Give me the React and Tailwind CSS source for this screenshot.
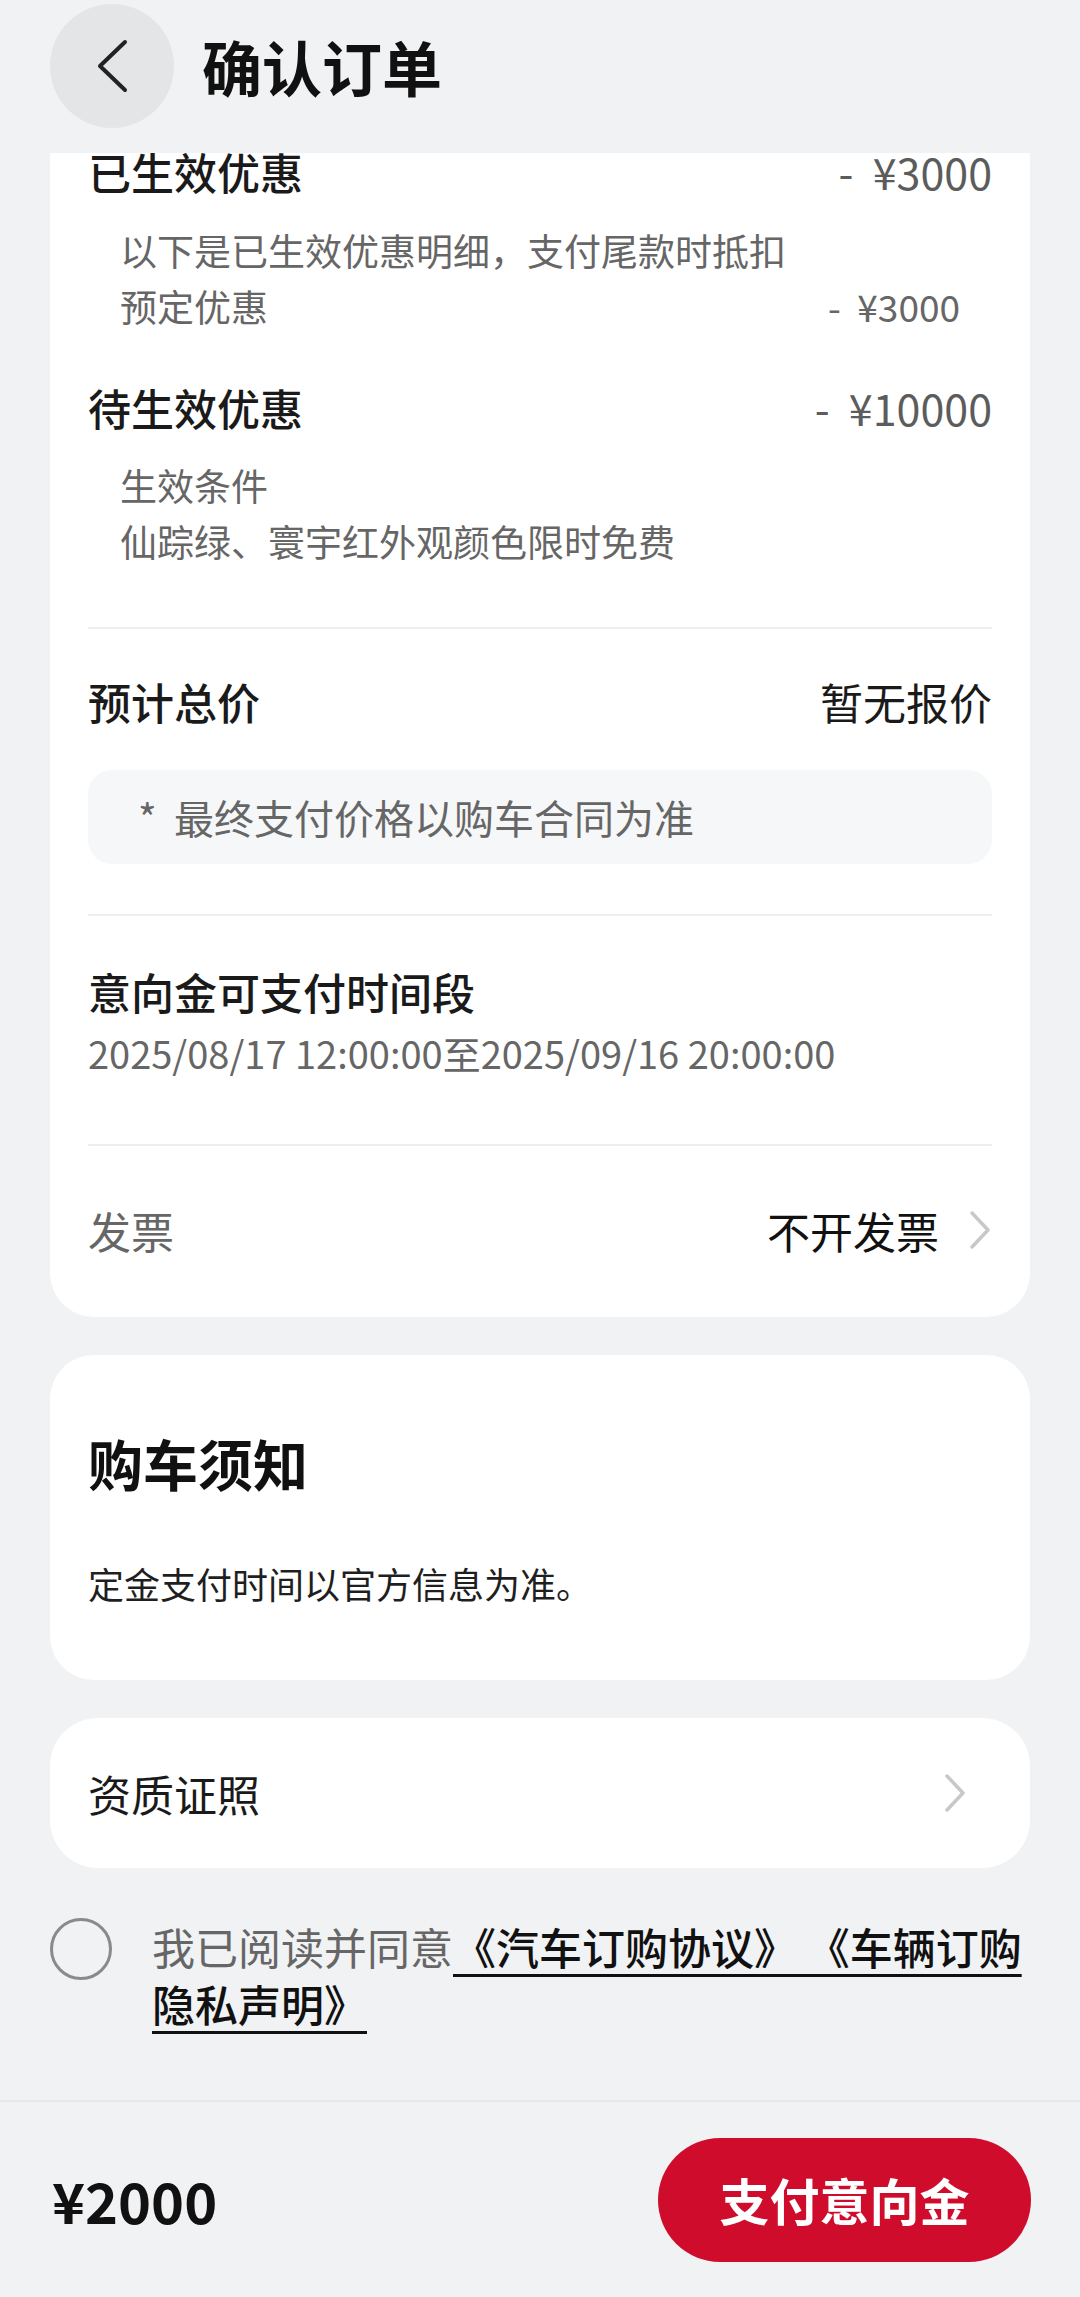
import React from "react";

function Chevron({ className = "" }) {
  return (
    <svg width="24" height="40" viewBox="0 0 24 40" className={className}>
      <polyline
        points="4,3 20,20 4,37"
        fill="none"
        stroke="#c8c8c8"
        strokeWidth="3.5"
        strokeLinecap="round"
        strokeLinejoin="round"
      />
    </svg>
  );
}

function Divider({ className = "" }) {
  return <div className={`h-[2px] bg-[#eeeeee] ${className}`}></div>;
}

export default function App() {
  return (
    <div className="w-[1080px] h-[2297px] flex flex-col bg-[#f1f2f4] overflow-hidden font-['Noto_Sans_CJK_SC',sans-serif]">
      {/* Header */}
      <header className="shrink-0 h-[153px] pt-[3px] pl-[50px]">
        <div className="flex items-center h-[125px]">
          <div className="w-[124px] h-[124px] rounded-full bg-[#e4e5e7] flex items-center justify-center">
            <svg width="34" height="54" viewBox="0 0 34 54">
              <polyline
                points="30,3 5,27 30,51"
                fill="none"
                stroke="#222"
                strokeWidth="4"
                strokeLinecap="round"
                strokeLinejoin="round"
              />
            </svg>
          </div>
          <h1 className="ml-[28px] text-[60px] font-bold leading-none text-[#111]">确认订单</h1>
        </div>
      </header>

      {/* Scroll area */}
      <main className="flex-1 overflow-hidden">
        {/* Order detail card (scrolled under header) */}
        <section className="mx-[50px] -mt-[50px] bg-white rounded-[44px] pt-[40px] pb-[59px] px-[38px]">
          <div className="flex justify-between items-center h-[56px]">
            <span className="text-[43px] font-medium text-[#1a1a1a]">已生效优惠</span>
            <span className="text-[43px] text-[#5c5c5c]">-&nbsp; ¥3000</span>
          </div>
          <div className="mt-[23px] px-[32px] text-[37px] leading-[56px] text-[#666]">
            <div>以下是已生效优惠明细，支付尾款时抵扣</div>
            <div className="flex justify-between">
              <span>预定优惠</span>
              <span>-&nbsp; ¥3000</span>
            </div>
          </div>

          <div className="mt-[45px] flex justify-between items-center h-[56px]">
            <span className="text-[43px] font-medium text-[#1a1a1a]">待生效优惠</span>
            <span className="text-[43px] text-[#5c5c5c]">-&nbsp; ¥10000</span>
          </div>
          <div className="mt-[22px] px-[32px] text-[37px] leading-[56px] text-[#666]">
            <div>生效条件</div>
            <div>仙踪绿、寰宇红外观颜色限时免费</div>
          </div>

          <Divider className="mt-[58px]" />

          <div className="mt-[44px] flex justify-between items-center h-[56px] text-[43px] text-[#1a1a1a]">
            <span className="font-medium">预计总价</span>
            <span>暂无报价</span>
          </div>
          <div className="mt-[41px] h-[94px] rounded-[24px] bg-[#f6f7f9] flex items-center pl-[50px] text-[40px] text-[#666]">
            <span className="w-[36px]">*</span>
            <span>最终支付价格以购车合同为准</span>
          </div>

          <Divider className="mt-[50px]" />

          <div className="mt-[47px] text-[43px] leading-[56px] font-medium text-[#1a1a1a]">意向金可支付时间段</div>
          <div className="mt-[6px] text-[38px] leading-[56px] text-[#666]">
            2025/08/17 12:00:00至2025/09/16 20:00:00
          </div>

          <Divider className="mt-[63px]" />

          <div className="mt-[56px] flex justify-between items-center h-[56px] text-[43px]">
            <span className="text-[#666]">发票</span>
            <div className="flex items-center">
              <span className="text-[#111]">不开发票</span>
              <Chevron className="ml-[29px]" />
            </div>
          </div>
        </section>

        {/* Purchase notice */}
        <section className="mx-[50px] mt-[38px] bg-white rounded-[44px] pt-[71px] pb-[72px] px-[38px]">
          <h2 className="text-[55px] leading-[72px] font-bold text-[#111]">购车须知</h2>
          <p className="mt-[60px] text-[36px] leading-[50px] text-[#1f1f1f]">定金支付时间以官方信息为准。</p>
        </section>

        {/* Certificates */}
        <section className="mx-[50px] mt-[38px] h-[150px] bg-white rounded-[48px] px-[38px] flex items-center justify-between">
          <span className="text-[43px] text-[#1a1a1a]">资质证照</span>
          <Chevron className="mr-[25px]" />
        </section>

        {/* Agreement */}
        <div className="mt-[50px] px-[50px] flex items-start">
          <div className="shrink-0 w-[62px] h-[62px] rounded-full border-[3px] border-[#8a8a8a]"></div>
          <p className="ml-[40px] text-[43px] leading-[57px] text-[#666]">
            我已阅读并同意
            <span className="text-[#111] font-medium underline decoration-[3px] underline-offset-[9px]">
              《汽车订购协议》 《车辆订购隐私声明》
            </span>
          </p>
        </div>
      </main>

      {/* Footer */}
      <footer className="shrink-0 h-[197px] border-t-2 border-[#e6e7e9] flex items-center justify-between pl-[52px] pr-[49px]">
        <span className="text-[56px] font-semibold text-[#111]">¥2000</span>
        <button className="w-[373px] h-[124px] rounded-full bg-[#d00c2d] text-white text-[50px] font-semibold">
          支付意向金
        </button>
      </footer>
    </div>
  );
}
